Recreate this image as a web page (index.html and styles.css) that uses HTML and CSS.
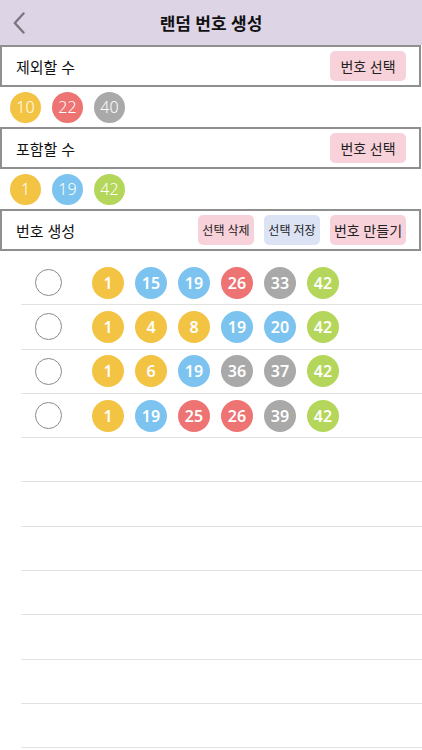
FILE: index.html
```html
<!DOCTYPE html>
<html lang="ko">
<head>
  <meta charset="UTF-8" />
  <meta name="viewport" content="width=device-width, initial-scale=1" />
  <title>랜덤 번호 생성</title>
  <link rel="stylesheet" href="styles.css">
</head>
<body>

  <header>
    <a class="back" href="#">
      <svg width="12" height="22" viewBox="0 0 12 22"><path d="M10.5 1.5 L1.8 11 L10.5 20.5" fill="none" stroke="#7b7680" stroke-width="2.4" stroke-linecap="round" stroke-linejoin="round"/></svg>
    </a>
    <h1>랜덤 번호 생성</h1>
  </header>

  <main>
    <div class="box">
      <span class="box-title">제외할 수</span>
      <button class="btn pink">번호 선택</button>
    </div>
    <div class="picked">
      <span class="ball yellow">10</span>
      <span class="ball red">22</span>
      <span class="ball gray">40</span>
    </div>

    <div class="box">
      <span class="box-title">포함할 수</span>
      <button class="btn pink">번호 선택</button>
    </div>
    <div class="picked">
      <span class="ball yellow">1</span>
      <span class="ball blue">19</span>
      <span class="ball green">42</span>
    </div>

    <div class="box">
      <span class="box-title">번호 생성</span>
      <div class="actions">
        <button class="btn pink small">선택 삭제</button>
        <button class="btn blue-btn small">선택 저장</button>
        <button class="btn pink">번호 만들기</button>
      </div>
    </div>

    <ul class="results">
      <li>
        <span class="radio"></span>
        <span class="ball yellow">1</span><span class="ball blue">15</span><span class="ball blue">19</span><span class="ball red">26</span><span class="ball gray">33</span><span class="ball green">42</span>
      </li>
      <li>
        <span class="radio"></span>
        <span class="ball yellow">1</span><span class="ball yellow">4</span><span class="ball yellow">8</span><span class="ball blue">19</span><span class="ball blue">20</span><span class="ball green">42</span>
      </li>
      <li>
        <span class="radio"></span>
        <span class="ball yellow">1</span><span class="ball yellow">6</span><span class="ball blue">19</span><span class="ball gray">36</span><span class="ball gray">37</span><span class="ball green">42</span>
      </li>
      <li>
        <span class="radio"></span>
        <span class="ball yellow">1</span><span class="ball blue">19</span><span class="ball red">25</span><span class="ball red">26</span><span class="ball gray">39</span><span class="ball green">42</span>
      </li>
      <li></li>
      <li></li>
      <li></li>
      <li></li>
      <li></li>
      <li></li>
      <li></li>
    </ul>
  </main>

</body>
</html>
```

FILE: styles.css
```css
body {
  margin: 0;
  font-family: "Noto Sans", "Noto Sans CJK KR", sans-serif;
  background: white;
  color: #111;
  overflow: hidden;
}

header {
  height: 45px;
  background: #ddd5e6;
  display: flex;
  align-items: center;
  justify-content: center;
  position: relative;
}

header h1 {
  margin: 0;
  font-size: 17px;
  font-weight: 700;
}

.back {
  position: absolute;
  left: 13px;
  top: 12px;
}

.box {
  height: 38px;
  border: 2px solid #8f8f8f;
  display: flex;
  align-items: center;
  justify-content: space-between;
  padding: 0 13px 0 14px;
  margin-right: 1px;
}

.box-title {
  font-size: 15px;
}

.actions {
  display: flex;
  gap: 10px;
}

.btn {
  height: 30px;
  border: none;
  border-radius: 5px;
  font-family: inherit;
  font-size: 14px;
  color: #222;
  padding: 0;
  width: 76px;
  white-space: nowrap;
}

.btn.small {
  font-size: 12px;
  width: 56px;
}

.pink {
  background: #f8d2da;
}

.blue-btn {
  background: #dce3f5;
}

.picked {
  height: 40px;
  display: flex;
  align-items: center;
  gap: 11px;
  padding-left: 10px;
}

.ball {
  width: 31px;
  height: 31px;
  border-radius: 50%;
  display: flex;
  align-items: center;
  justify-content: center;
  color: white;
  font-size: 16px;
  font-weight: 300;
}

.yellow { background: #f3c343; }
.red { background: #ee7373; }
.gray { background: #a9a9a9; }
.blue { background: #7cc4ef; }
.green { background: #b4d65a; }

.results {
  list-style: none;
  margin: 10px 0 0 21px;
  padding: 0;
}

.results li {
  height: 43.3px;
  border-bottom: 1px solid #e2e2e2;
  display: flex;
  align-items: center;
  gap: 11px;
}

.results .ball {
  width: 32px;
  height: 32px;
  font-size: 16px;
  font-weight: 600;
}

.radio {
  width: 25px;
  height: 25px;
  border: 1px solid #8a8a8a;
  border-radius: 50%;
  margin-left: 14px;
  margin-right: 19px;
}
```
